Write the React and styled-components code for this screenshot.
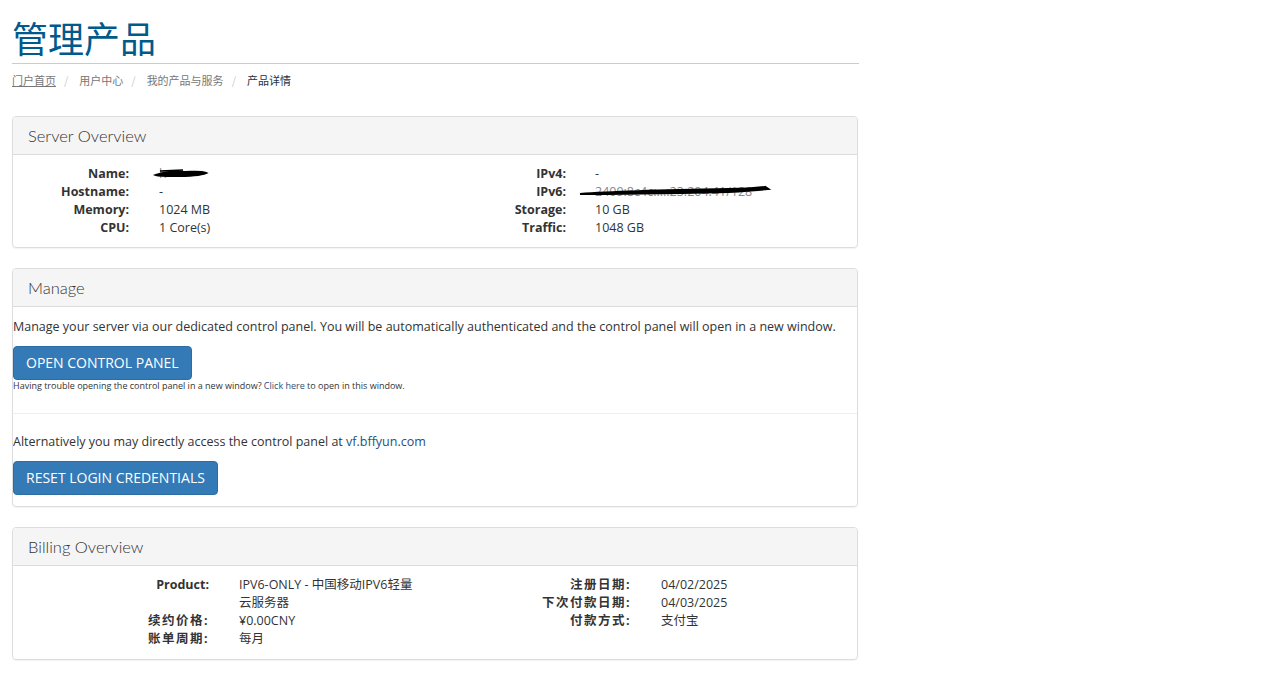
import styled, { createGlobalStyle } from 'styled-components'

const GlobalStyle = createGlobalStyle`
  body {
    margin: 0;
    background: #ffffff;
    font-family: "Open Sans", "Noto Sans CJK SC", sans-serif;
    font-size: 12.5px;
    color: #333333;
  }
`

const Page = styled.div`
  width: 847px;
  padding: 16px 0 20px 12px;
`

const Title = styled.h1`
  margin: 0;
  font-size: 36px;
  font-weight: 400;
  line-height: 42px;
  color: #005a8c;
  font-family: "Noto Sans CJK SC", sans-serif;
  padding-bottom: 5px;
  border-bottom: 1px solid #cccccc;
`

const Crumbs = styled.ol`
  list-style: none;
  margin: 7px 0 27px 0;
  padding: 0;
  display: flex;
  font-size: 11px;
  line-height: 18px;
  color: #777777;
  font-family: "Noto Sans CJK SC", sans-serif;
`

const Crumb = styled.li`
  color: ${({ $active }) => ($active ? '#1d3144' : '#777777')};
  text-decoration: ${({ $link }) => ($link ? 'underline' : 'none')};
`

const Sep = styled.span`
  color: #cccccc;
  margin: 0 11px 0 8px;
`

const Panel = styled.div`
  border: 1px solid #dddddd;
  border-radius: 4px;
  box-shadow: 0 1px 1px rgba(0, 0, 0, 0.05);
  margin-bottom: 20px;
  margin-right: 1px;
  overflow: hidden;
`

const PanelHeading = styled.div`
  background: #f5f5f5;
  border-bottom: 1px solid #dddddd;
  height: 37px;
  display: flex;
  align-items: center;
  padding-left: 15px;
  font-family: Lato, "Open Sans", sans-serif;
  font-size: 16.5px;
  font-weight: 300;
  color: #333333;
`

const PanelBody = styled.div`
  padding: ${({ $pad }) => $pad || '10px 0 10px 0'};
`

const Halves = styled.div`
  display: grid;
  grid-template-columns: 1fr 1fr;
`

const InfoList = styled.div`
  display: grid;
  grid-template-columns: ${({ $label }) => $label}px 1fr;
  column-gap: ${({ $gap }) => $gap}px;
  line-height: 18px;
  align-content: start;
  padding-right: ${({ $right }) => $right || 0}px;
`

const Label = styled.div`
  text-align: right;
  font-weight: 700;
  letter-spacing: ${({ $spaced }) => ($spaced ? '1.5px' : '0')};
`

const Value = styled.div`
  position: relative;
  color: ${({ $muted }) => ($muted ? '#888888' : '#333333')};
  white-space: ${({ $nowrap }) => ($nowrap ? 'nowrap' : 'normal')};
`

const Scribble = styled.svg`
  position: absolute;
  left: ${({ $left }) => $left}px;
  top: 2px;
  overflow: visible;
`

const Text = styled.p`
  margin: 0 0 10px 0;
  line-height: 18px;
`

const Link = styled.a`
  color: #23527c;
  text-decoration: none;
`

const Button = styled.button`
  display: inline-block;
  background: #337ab7;
  border: 1px solid #2e6da4;
  border-radius: 4px;
  color: #ffffff;
  font-family: "Open Sans", sans-serif;
  font-size: 14px;
  line-height: 20px;
  padding: 6px 12px;
  text-transform: uppercase;
  cursor: pointer;
`

const Small = styled.div`
  font-size: 9px;
  line-height: 11px;
  margin-bottom: 22px;
`

const Divider = styled.hr`
  border: 0;
  border-top: 1px solid #eeeeee;
  margin: 0 0 19px 0;
`

const Row = ({ label, spaced, children }) => (
  <>
    <Label $spaced={spaced}>{label}</Label>
    <Value>{children}</Value>
  </>
)

const App = () => (
  <Page>
    <GlobalStyle />
    <Title>管理产品</Title>
    <Crumbs>
      <Crumb $link>门户首页</Crumb>
      <Sep>/</Sep>
      <Crumb>用户中心</Crumb>
      <Sep>/</Sep>
      <Crumb>我的产品与服务</Crumb>
      <Sep>/</Sep>
      <Crumb $active>产品详情</Crumb>
    </Crumbs>

    <Panel>
      <PanelHeading>Server Overview</PanelHeading>
      <PanelBody>
        <Halves>
          <InfoList $label={116} $gap={30}>
            <Row label="Name:">
              <Value $nowrap $muted>
                h
                <Scribble $left={-4} width="52" height="12" viewBox="0 0 52 12">
                  <path d="M1 8 C10 5 20 4 30 5 C38 5 46 4 51 6 C44 9 30 9 18 9 C10 9 4 9 1 8 Z" fill="#000" stroke="#000" strokeWidth="2" />
                  <path d="M5 4 L28 3" stroke="#000" strokeWidth="1.5" />
                </Scribble>
              </Value>
            </Row>
            <Row label="Hostname:">-</Row>
            <Row label="Memory:">1024 MB</Row>
            <Row label="CPU:">1 Core(s)</Row>
          </InfoList>
          <InfoList $label={131} $gap={29}>
            <Row label="IPv4:">-</Row>
            <Row label="IPv6:">
              <Value $nowrap $muted>
                2409:8c4c:...:23:204:41/128
                <Scribble $left={-16} width="190" height="12" viewBox="0 0 190 12">
                  <path d="M1 9 C40 6 90 5 150 4 C165 4 178 3 186 2 L189 4 C175 5 165 6 150 7 C100 8 50 9 1 9 Z" fill="#000" stroke="#000" strokeWidth="2.2" />
                </Scribble>
              </Value>
            </Row>
            <Row label="Storage:">10 GB</Row>
            <Row label="Traffic:">1048 GB</Row>
          </InfoList>
        </Halves>
      </PanelBody>
    </Panel>

    <Panel>
      <PanelHeading>Manage</PanelHeading>
      <PanelBody $pad="11px 0 11px 0">
        <Text>
          Manage your server via our dedicated control panel. You will be automatically authenticated and the control panel will open in a new window.
        </Text>
        <Button>Open Control Panel</Button>
        <Small>
          Having trouble opening the control panel in a new window? <Link href="#">Click here</Link> to open in this window.
        </Small>
        <Divider />
        <Text>
          Alternatively you may directly access the control panel at <Link href="#">vf.bffyun.com</Link>
        </Text>
        <Button>Reset Login Credentials</Button>
      </PanelBody>
    </Panel>

    <Panel>
      <PanelHeading>Billing Overview</PanelHeading>
      <PanelBody $pad="10px 0 11px 0">
        <Halves>
          <InfoList $label={196} $gap={30} $right={15}>
            <Row label="Product:">IPV6-ONLY - 中国移动IPV6轻量云服务器</Row>
            <Row label="续约价格:" spaced>¥0.00CNY</Row>
            <Row label="账单周期:" spaced>每月</Row>
          </InfoList>
          <InfoList $label={196} $gap={30} $right={15}>
            <Row label="注册日期:" spaced>04/02/2025</Row>
            <Row label="下次付款日期:" spaced>04/03/2025</Row>
            <Row label="付款方式:" spaced>支付宝</Row>
          </InfoList>
        </Halves>
      </PanelBody>
    </Panel>
  </Page>
)

export default App
